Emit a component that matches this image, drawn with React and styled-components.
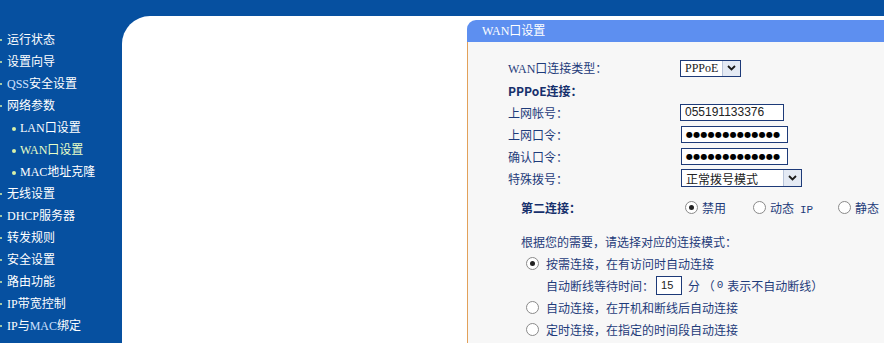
import React from 'react';
import styled, { createGlobalStyle } from 'styled-components';

const GlobalStyle = createGlobalStyle`
  html, body { margin: 0; padding: 0; overflow: hidden; }
  body { background: #0650a0; font-family: "Liberation Serif", "Noto Sans CJK SC", serif; }
`;

const Page = styled.div`
  display: flex;
  height: 343px;
  background: #0650a0;
  overflow: hidden;
`;

// left menu

const Sidebar = styled.ul`
  width: 122px;
  flex: none;
  margin: 0;
  padding: 29px 0 0 0;
  list-style: none;
`;

const MenuItem = styled.li`
  position: relative;
  height: 22px;
  line-height: 22px;
  padding-left: ${(p) => (p.sub ? '20px' : '7px')};
  font-size: 12px;
  color: ${(p) => (p.active ? '#e6ffc8' : '#ffffff')};
  white-space: nowrap;
  &::before {
    content: '';
    position: absolute;
    left: ${(p) => (p.sub ? '12px' : '0')};
    top: 10px;
    width: ${(p) => (p.sub ? '4px' : '2px')};
    height: ${(p) => (p.sub ? '4px' : '2px')};
    border-radius: 50%;
    background: #d8f0a8;
  }
`;

const Latin = styled.span`
  font-family: "Liberation Serif", serif;
  font-size: 12px;
  color: ${(p) => p.tint || 'inherit'};
`;

const Main = styled.main`
  flex: 1;
  display: flex;
  margin-top: 16px;
  padding: 4px 0 0 345px;
  background: #ffffff;
  border-top-left-radius: 28px;
  min-width: 0;
`;

const Panel = styled.section`
  flex: 1;
  display: flex;
  flex-direction: column;
  min-width: 0;
`;

const PanelHead = styled.div`
  height: 22px;
  line-height: 22px;
  padding-left: 15px;
  background: #5d8ff0;
  border-top-left-radius: 9px;
  color: #fff;
  font-size: 12px;
`;

const PanelBody = styled.div`
  flex: 1;
  background: #f7f7f7;
  border-left: 1px solid #e2a15a;
  padding: 15px 0 0 40px;
  color: #1e3b7a;
  font-size: 12px;
  font-family: "Noto Sans CJK SC", sans-serif;
`;

const Row = styled.div`
  display: grid;
  grid-template-columns: ${(p) => (p.indent ? '159px' : '172px')} 1fr;
  align-items: center;
  height: 22px;
  padding-left: ${(p) => (p.indent ? '13px' : '0')};
  margin-top: ${(p) => p.gap || 0}px;
  white-space: nowrap;
`;

const Label = styled.span`
  font-weight: ${(p) => (p.bold ? 700 : 400)};
  color: ${(p) => (p.bold ? '#16306c' : '#1e3b7a')};
`;

const Box = styled.div`
  box-sizing: border-box;
  width: ${(p) => p.w}px;
  height: 17px;
  border: 1px solid #1d3a78;
  background: #fff;
  display: flex;
  align-items: center;
  padding-left: 4px;
  color: #222;
  font-size: 12px;
  font-family: ${(p) => (p.serif ? '"Liberation Serif", serif' : '"Liberation Sans", "Noto Sans CJK SC", sans-serif')};
  margin-left: ${(p) => p.off || 0}px;
  overflow: hidden;
`;

const Dots = styled.span`
  font-family: "DejaVu Sans", sans-serif;
  font-size: 8px;
  font-weight: 700;
  letter-spacing: 0.3px;
  color: #000;
`;

const SelectBox = styled(Box)`
  height: ${(p) => p.h || 17}px;
  padding-right: 0;
  justify-content: space-between;
`;

const Arrow = styled.span`
  width: 17px;
  height: 100%;
  border-left: 1px solid #b8c4da;
  background: #e4eaf4;
  display: flex;
  align-items: center;
  justify-content: center;
`;

const RadioLine = styled.div`
  display: flex;
  align-items: center;
  padding-left: ${(p) => p.pad || 0}px;
`;

const Choice = styled.span`
  display: inline-flex;
  align-items: center;
  gap: 4px;
  width: ${(p) => (p.w ? p.w + 'px' : 'auto')};
`;

const Radio = styled.span`
  box-sizing: border-box;
  flex: none;
  width: 13px;
  height: 13px;
  border-radius: 50%;
  border: 1px solid #8a8a8a;
  background: #fff;
  display: inline-flex;
  align-items: center;
  justify-content: center;
  &::after {
    content: '';
    width: 5px;
    height: 5px;
    border-radius: 50%;
    background: ${(p) => (p.on ? '#222' : 'transparent')};
  }
`;

const Mono = styled.span`
  font-family: "Liberation Mono", monospace;
  font-size: 11px;
  margin: ${(p) => p.m || '0 0 0 6px'};
`;

const Line = styled.div`
  height: 22px;
  display: flex;
  align-items: center;
  padding-left: ${(p) => p.pad || 0}px;
  margin-top: ${(p) => p.gap || 0}px;
  white-space: nowrap;
`;

const Small = styled(Box)`
  margin: 0 6px 0 2px;
  height: 19px;
  font-size: 11px;
`;

const OptionText = styled.span`
  margin-left: ${(p) => (p.tight ? 0 : 3)}px;
`;

const Chevron = () => (
  <svg width="9" height="6" viewBox="0 0 9 6">
    <polyline points="1,1 4.5,4.5 8,1" fill="none" stroke="#1a1a1a" strokeWidth="1.8" />
  </svg>
);

const menu = [
  { t: '运行状态' },
  { t: '设置向导' },
  { t: <><Latin tint="#cfe0ff">QSS</Latin>安全设置</> },
  { t: '网络参数' },
  { t: <><Latin>LAN</Latin>口设置</>, sub: true },
  { t: <><Latin>WAN</Latin>口设置</>, sub: true, active: true },
  { t: <><Latin>MAC</Latin>地址克隆</>, sub: true },
  { t: '无线设置' },
  { t: <><Latin>DHCP</Latin>服务器</> },
  { t: '转发规则' },
  { t: '安全设置' },
  { t: '路由功能' },
  { t: <><Latin>IP</Latin>带宽控制</> },
  { t: <><Latin>IP</Latin>与<Latin tint="#cfe0ff">MAC</Latin>绑定</> },
];

const mask = '●●●●●●●●●●●●●';

export default function App() {
  return (
    <Page>
      <GlobalStyle />
      <Sidebar>
        {menu.map((m, i) => (
          <MenuItem key={i} sub={m.sub} active={m.active}>
            {m.t}
          </MenuItem>
        ))}
      </Sidebar>
      <Main>
        <Panel>
          <PanelHead>
            <Latin>WAN</Latin>口设置
          </PanelHead>
          <PanelBody>
            <Row>
              <Label><Latin>WAN</Latin>口连接类型：</Label>
              <SelectBox w={61} serif>
                PPPoE
                <Arrow><Chevron /></Arrow>
              </SelectBox>
            </Row>
            <Row>
              <Label bold>PPPoE连接：</Label>
            </Row>
            <Row>
              <Label>上网帐号：</Label>
              <Box w={104}>055191133376</Box>
            </Row>
            <Row>
              <Label>上网口令：</Label>
              <Box w={107} off={1}><Dots>{mask}</Dots></Box>
            </Row>
            <Row>
              <Label>确认口令：</Label>
              <Box w={107} off={1}><Dots>{mask}</Dots></Box>
            </Row>
            <Row>
              <Label>特殊拨号：</Label>
              <SelectBox w={121} h={18} off={1}>
                正常拨号模式
                <Arrow><Chevron /></Arrow>
              </SelectBox>
            </Row>
            <Row indent gap={7}>
              <Label bold>第二连接：</Label>
              <RadioLine pad={5}>
                <Choice w={68}><Radio on />禁用</Choice>
                <Choice w={85}><Radio /><OptionText tight>动态<Mono>IP</Mono></OptionText></Choice>
                <Choice><Radio />静态</Choice>
              </RadioLine>
            </Row>
            <Line pad={13} gap={12}>根据您的需要，请选择对应的连接模式：</Line>
            <Line pad={18}>
              <Choice><Radio on /><OptionText>按需连接，在有访问时自动连接</OptionText></Choice>
            </Line>
            <Line pad={38}>
              自动断线等待时间：<Small w={26}>15</Small>分 （<Mono m="0 4px 0 2px">0</Mono>表示不自动断线）
            </Line>
            <Line pad={18}>
              <Choice><Radio /><OptionText>自动连接，在开机和断线后自动连接</OptionText></Choice>
            </Line>
            <Line pad={18}>
              <Choice><Radio /><OptionText>定时连接，在指定的时间段自动连接</OptionText></Choice>
            </Line>
          </PanelBody>
        </Panel>
      </Main>
    </Page>
  );
}
